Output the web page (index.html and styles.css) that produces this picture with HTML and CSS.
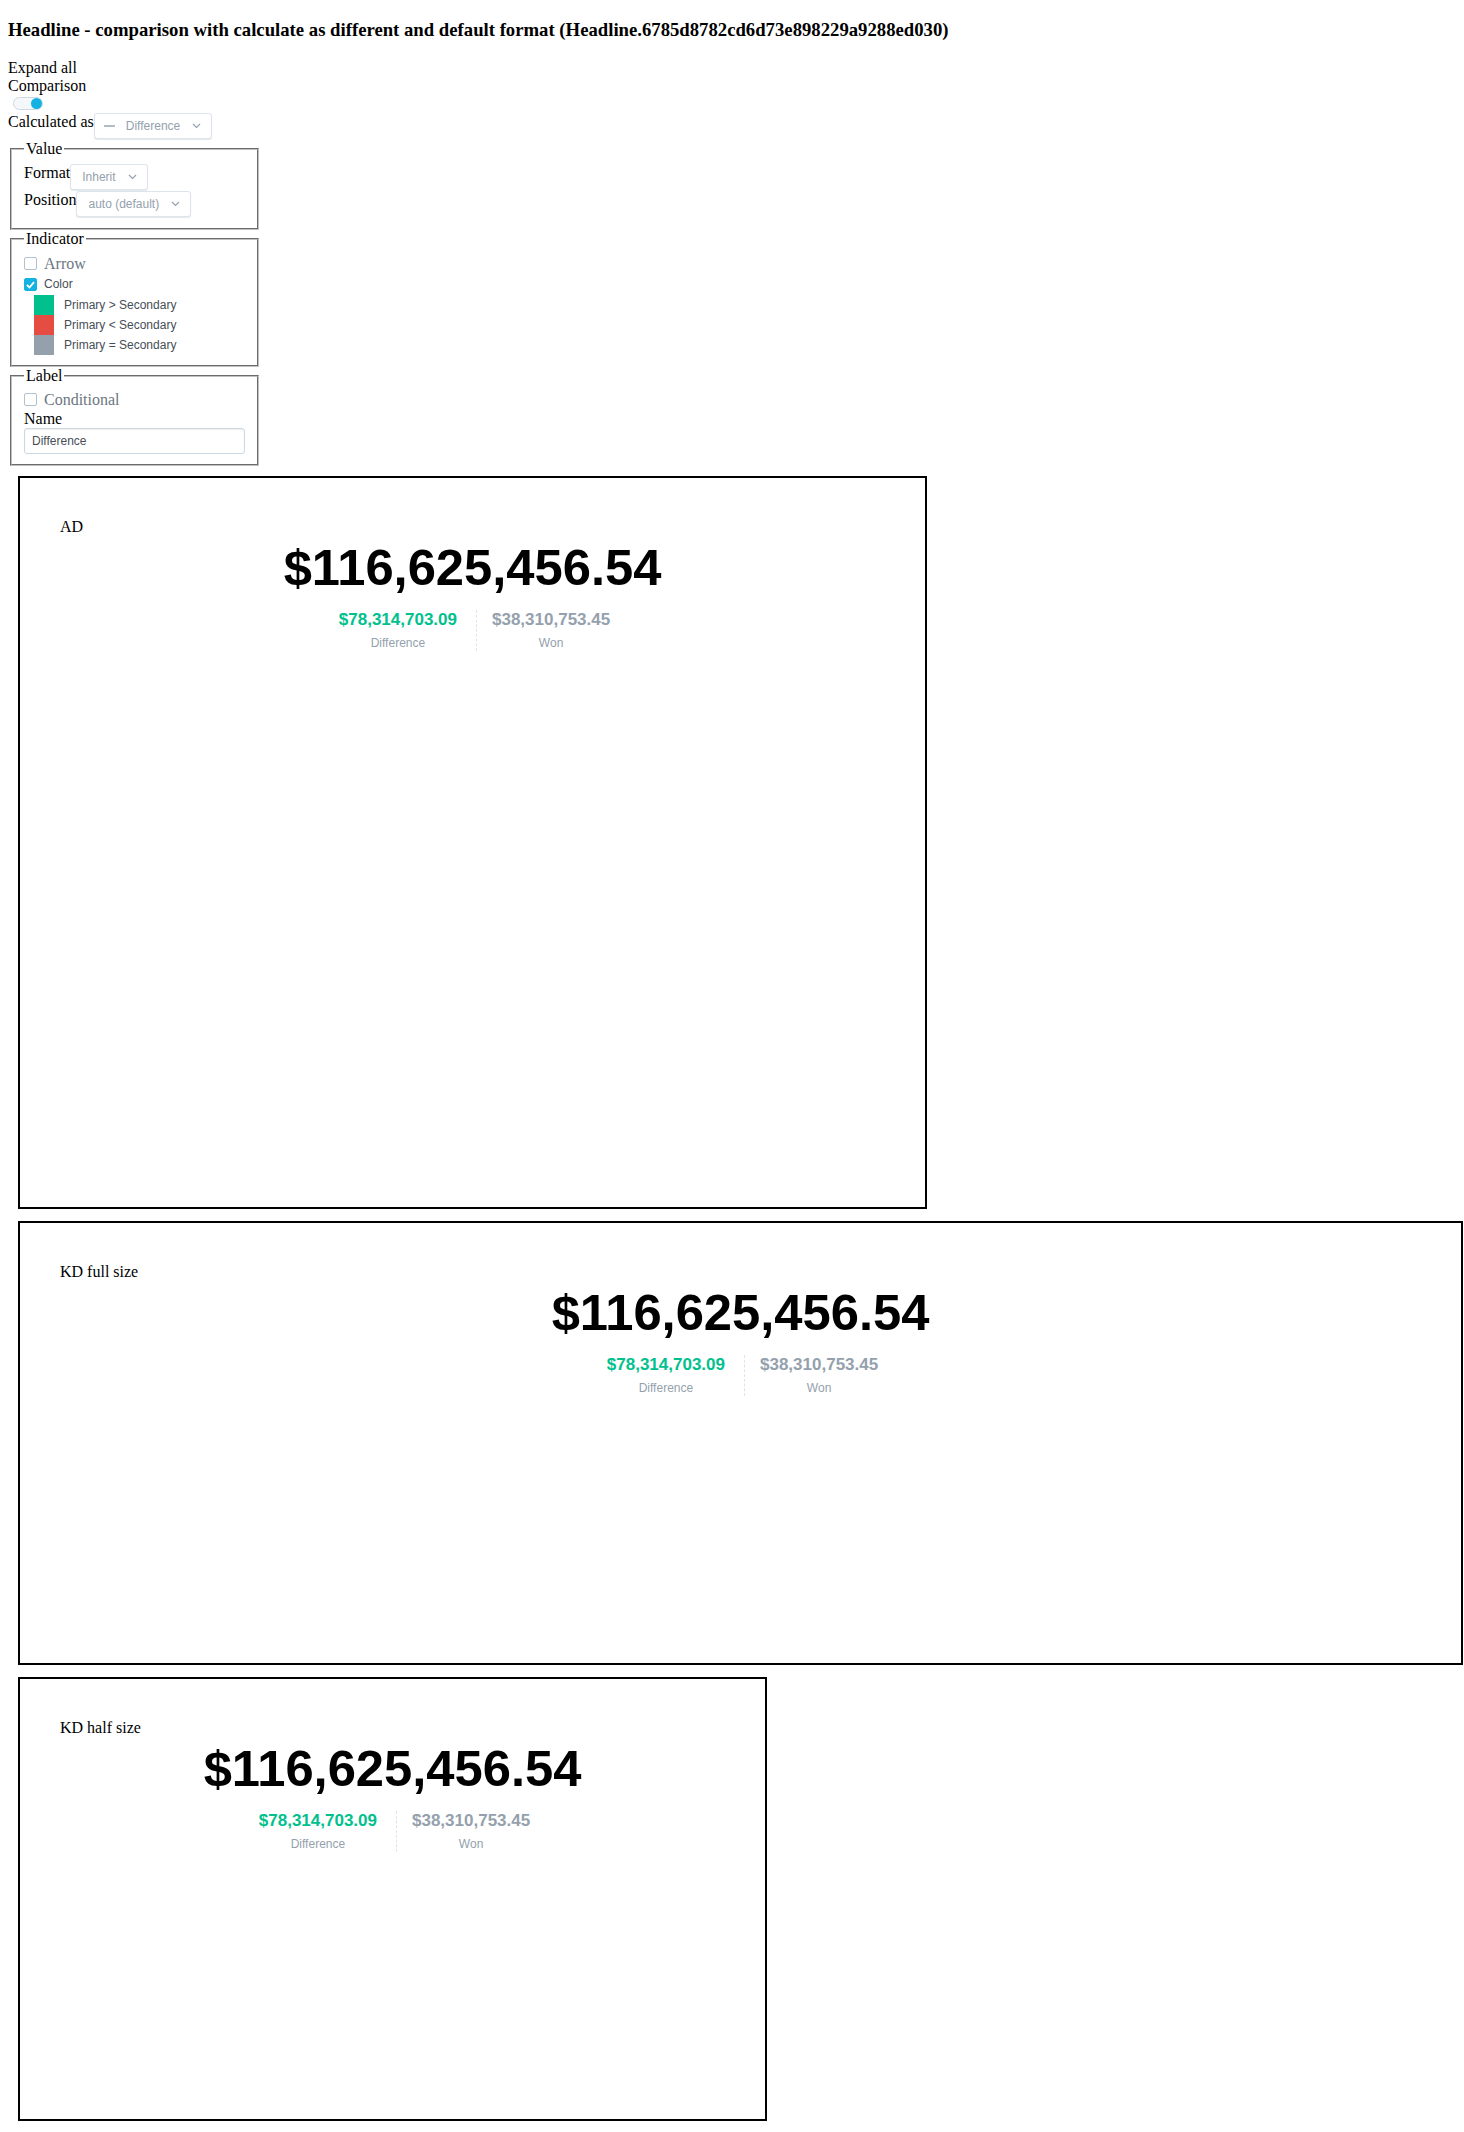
FILE: index.html
```html
<!DOCTYPE html>
<html>
<head>
<meta charset="utf-8">
<link rel="stylesheet" href="styles.css">
</head>
<body>
<h3 class="title">Headline - comparison with calculate as different and default format (Headline.6785d8782cd6d73e898229a9288ed030)</h3>
<div class="controls">
  <div class="line">Expand all</div>
  <div class="line">Comparison</div>
  <div class="toggle"><span class="knob"></span></div>
  <div class="row">
    <span class="row-label">Calculated as</span>
    <div class="select select-calc">
      <span class="dash"></span>
      <span class="select-text">Difference</span>
      <svg class="chev" width="9" height="6" viewBox="0 0 9 6"><path d="M1 1 L4.5 4.5 L8 1" fill="none" stroke="#94a1ad" stroke-width="1.2"/></svg>
    </div>
  </div>
  <fieldset class="group">
    <legend>Value</legend>
    <div class="row">
      <span class="row-label">Format</span>
      <div class="select">
        <span class="select-text">Inherit</span>
        <svg class="chev" width="9" height="6" viewBox="0 0 9 6"><path d="M1 1 L4.5 4.5 L8 1" fill="none" stroke="#94a1ad" stroke-width="1.2"/></svg>
      </div>
    </div>
    <div class="row">
      <span class="row-label">Position</span>
      <div class="select">
        <span class="select-text">auto (default)</span>
        <svg class="chev" width="9" height="6" viewBox="0 0 9 6"><path d="M1 1 L4.5 4.5 L8 1" fill="none" stroke="#94a1ad" stroke-width="1.2"/></svg>
      </div>
    </div>
  </fieldset>
  <fieldset class="group">
    <legend>Indicator</legend>
    <div class="check-row check-row-arrow">
      <span class="checkbox"></span>
      <span class="check-label">Arrow</span>
    </div>
    <div class="check-row check-row-color">
      <span class="checkbox checked"><svg width="9" height="8" viewBox="0 0 9 8"><path d="M1 4 L3.5 6.5 L8 1.2" fill="none" stroke="#fff" stroke-width="1.8"/></svg></span>
      <span class="check-label-sans">Color</span>
    </div>
    <div class="swatch-row"><span class="swatch swatch-green"></span><span class="swatch-text">Primary &gt; Secondary</span></div>
    <div class="swatch-row"><span class="swatch swatch-red"></span><span class="swatch-text">Primary &lt; Secondary</span></div>
    <div class="swatch-row"><span class="swatch swatch-gray"></span><span class="swatch-text">Primary = Secondary</span></div>
  </fieldset>
  <fieldset class="group">
    <legend>Label</legend>
    <div class="check-row">
      <span class="checkbox"></span>
      <span class="check-label">Conditional</span>
    </div>
    <div class="line name-line">Name</div>
    <div class="text-input">Difference</div>
  </fieldset>
</div>

<div class="cards">
  <div class="card card-ad">
    <div class="card-label">AD</div>
    <div class="headline">
      <div class="primary">$116,625,456.54</div>
      <div class="secondary">
        <div class="item item-left"><div class="val val-pos">$78,314,703.09</div><div class="lbl">Difference</div></div>
        <div class="item item-right"><div class="val val-neutral">$38,310,753.45</div><div class="lbl">Won</div></div>
      </div>
    </div>
  </div>
  <div class="card card-full">
    <div class="card-label">KD full size</div>
    <div class="headline">
      <div class="primary">$116,625,456.54</div>
      <div class="secondary">
        <div class="item item-left"><div class="val val-pos">$78,314,703.09</div><div class="lbl">Difference</div></div>
        <div class="item item-right"><div class="val val-neutral">$38,310,753.45</div><div class="lbl">Won</div></div>
      </div>
    </div>
  </div>
  <div class="card card-half">
    <div class="card-label">KD half size</div>
    <div class="headline">
      <div class="primary">$116,625,456.54</div>
      <div class="secondary">
        <div class="item item-left"><div class="val val-pos">$78,314,703.09</div><div class="lbl">Difference</div></div>
        <div class="item item-right"><div class="val val-neutral">$38,310,753.45</div><div class="lbl">Won</div></div>
      </div>
    </div>
  </div>
</div>
</body>
</html>
```

FILE: styles.css
```css
html {
  background: #fff;
}
body {
  margin: 0 0 0 8px;
  font-family: "Liberation Serif", "Times New Roman", serif;
  font-size: 16px;
  color: #000;
}
.title {
  font-size: 18.72px;
  font-weight: bold;
  margin: 0;
  padding: 18.72px 0;
}
.controls {
  width: 253px;
}
.line {
  line-height: normal;
}
.toggle {
  position: relative;
  width: 30px;
  height: 13px;
  box-sizing: border-box;
  margin: 2px 0 3px 5px;
  border: 1px solid #ccd8e2;
  border-radius: 7px;
  background: #f5f8fa;
}
.knob {
  position: absolute;
  right: 0;
  top: 0;
  width: 11px;
  height: 11px;
  border-radius: 50%;
  background: #14b2e2;
}
.row {
  display: flex;
  align-items: flex-start;
  margin-bottom: 1px;
}
.row-label {
  line-height: normal;
}
.select {
  display: flex;
  align-items: center;
  height: 26px;
  box-sizing: border-box;
  padding: 0 10px 0 11px;
  border: 1px solid #dde4eb;
  border-radius: 3px;
  background: #fff;
  box-shadow: 0 1px 1px 0 rgba(20, 56, 93, 0.12);
  font-family: "Liberation Sans", Arial, sans-serif;
  font-size: 12px;
  color: #94a1ad;
}
.select-calc {
  padding-left: 9px;
}
.dash {
  display: inline-block;
  width: 11px;
  height: 2px;
  background: #b0bcc8;
  margin-right: 11px;
}
.select-text {
  white-space: nowrap;
}
.chev {
  margin-left: 12px;
  display: block;
}
.group {
  box-sizing: border-box;
  width: 249px;
  margin: 0 2px;
  padding: 0.35em 0.75em 0.625em;
  border: 2px groove #c0c0c0;
}
.group legend {
  padding: 0 2px;
}
.check-row {
  display: flex;
  align-items: center;
  height: 18.4px;
}
.check-row-arrow {
  padding-top: 1px;
}
.check-row-color {
  height: 22px;
  align-items: flex-start;
}
.check-row-color .checkbox {
  margin-top: 5px;
}
.check-row-color .check-label-sans {
  margin-top: 4px;
}
.checkbox {
  display: flex;
  align-items: center;
  justify-content: center;
  width: 13px;
  height: 13px;
  box-sizing: border-box;
  border: 1px solid #b1c1d1;
  border-radius: 2px;
  background: #fff;
  margin-right: 7px;
  flex: none;
}
.checkbox.checked {
  background: #14b2e2;
  border-color: #14b2e2;
}
.check-label {
  color: #6d7680;
}
.check-label-sans {
  font-family: "Liberation Sans", Arial, sans-serif;
  font-size: 12px;
  color: #464e56;
}
.swatch-row {
  display: flex;
  align-items: center;
  height: 20px;
}
.swatch {
  width: 20px;
  height: 20px;
  margin: 0 10px;
  flex: none;
}
.swatch-green { background: #00c18d; }
.swatch-red { background: #e54d42; }
.swatch-gray { background: #94a1ad; }
.swatch-text {
  font-family: "Liberation Sans", Arial, sans-serif;
  font-size: 12px;
  color: #464e56;
}
.name-line {
  margin-top: 1px;
}
.text-input {
  box-sizing: border-box;
  width: 100%;
  height: 26px;
  display: flex;
  align-items: center;
  padding-left: 7px;
  border: 1px solid #ccd8e2;
  border-radius: 3px;
  box-shadow: inset 0 1px 1px rgba(31, 53, 74, 0.08);
  font-family: "Liberation Sans", Arial, sans-serif;
  font-size: 12px;
  color: #464e56;
}
.cards {
  display: flex;
  flex-direction: column;
  align-items: flex-start;
  gap: 12px;
  margin-top: 10px;
  padding-left: 10px;
}
.card {
  box-sizing: border-box;
  border: 2px solid #000;
  padding: 40px;
  flex: none;
}
.card-ad { width: 909px; height: 733px; }
.card-full { width: 1445px; height: 444px; }
.card-half { width: 749px; height: 444px; }
.card-label {
  line-height: normal;
}
.headline {
  display: flex;
  flex-direction: column;
  align-items: center;
  font-family: "Liberation Sans", Arial, sans-serif;
}
.primary {
  margin-top: 3px;
  font-size: 50.7px;
  line-height: 57px;
  font-weight: bold;
  color: #000;
  white-space: nowrap;
}
.secondary {
  display: flex;
  margin-top: 14px;
}
.item {
  display: flex;
  flex-direction: column;
  align-items: center;
  padding-bottom: 1px;
}
.item-left {
  padding-left: 19px;
  padding-right: 19px;
}
.item-right {
  padding-left: 15px;
  padding-right: 15px;
  border-left: 1px dashed #dde4eb;
}
.val {
  font-size: 17px;
  line-height: 20px;
  font-weight: bold;
  white-space: nowrap;
}
.val-pos { color: #00c18d; }
.val-neutral { color: #94a1ad; }
.lbl {
  margin-top: 6px;
  font-size: 12px;
  line-height: 14px;
  color: #94a1ad;
}
```
